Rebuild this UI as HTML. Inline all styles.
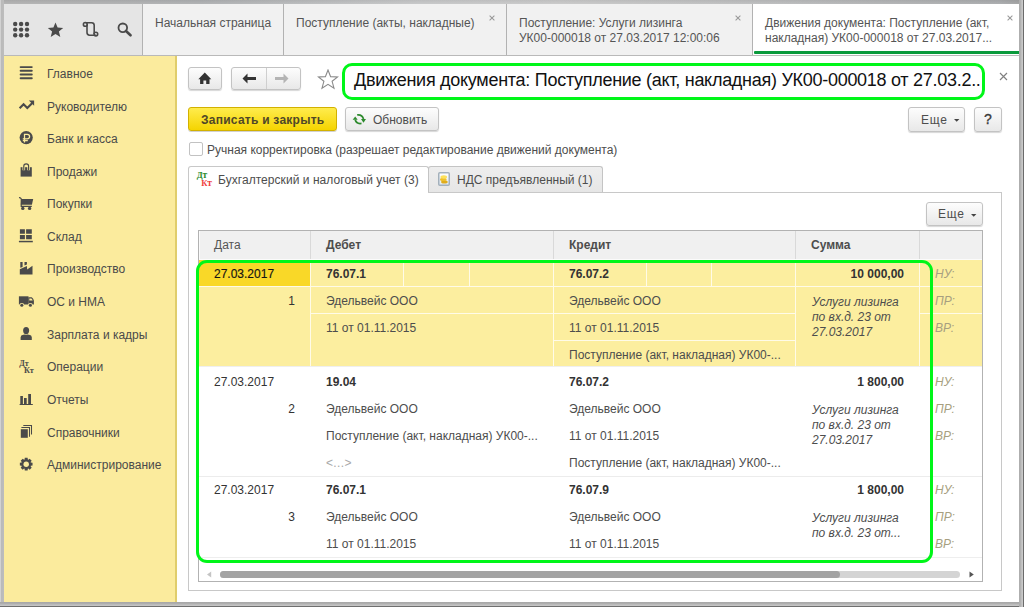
<!DOCTYPE html>
<html><head><meta charset="utf-8">
<style>
*{margin:0;padding:0;box-sizing:border-box}
html,body{width:1024px;height:607px;overflow:hidden}
body{position:relative;background:#fff;font-family:"Liberation Sans",sans-serif;color:#4d4d4d;font-size:12px;line-height:14px}
.a{position:absolute;white-space:nowrap}
/* window frame */
#ftop{left:0;top:0;width:1024px;height:4px;background:linear-gradient(rgba(0,0,0,0.05),rgba(255,255,255,0.05)),linear-gradient(90deg,#b2b2b2 0,#aeb0b2 200px,#c6c7c8 420px,#c9c9c9 560px,#bbbcbd 780px,#a9abad 1000px,#a0a0a0 1024px)}
#fleft{left:0;top:0;width:4px;height:607px;background:linear-gradient(90deg,#d2d2d2 0,#d2d2d2 1px,#bababa 1.5px,#bdbdbd)}
#fright{left:1019px;top:0;width:5px;height:607px;background:linear-gradient(90deg,#acacac 0,#b4b4b4 40%,#cacaca 60%,#c8c8c8 76%,#6e6e6e 84%,#666 100%)}
#fbot{left:0;top:602px;width:1019px;height:5px;background:linear-gradient(#a6a6a6 0,#b0b0b0 40%,#c4c4c4 60%,#c2c2c2 76%,#727272 84%,#6a6a6a 100%)}
/* top bar */
#topbar{left:4px;top:4px;width:1015px;height:52px;background:#f1f1f1;border-bottom:1px solid #b9b9b9}
#icons{left:0;top:0;width:139px;height:51px;background:#e5e5e5;border-right:1px solid #b2b2b2}
.tab{top:0;height:51px;border-right:1px solid #b2b2b2;color:#555}
.tx{color:#a0a0a0;font-size:13px}
/* sidebar */
#side{left:4px;top:56px;width:173px;height:546px;background:#fbeb9d;border-right:2px solid #e0cd6c}
.si{left:43px;color:#4a4a4a}
.sic{left:15px}
/* buttons */
.btn{border:1px solid #c3c3c3;border-radius:3px;background:linear-gradient(#fdfdfd,#e8e8e8);box-shadow:0 1px 1px rgba(0,0,0,0.16)}
.ybtn{border:1px solid #d2b100;border-radius:3px;background:linear-gradient(#ffec4d,#f5d400);box-shadow:0 1px 0 rgba(0,0,0,0.18)}
/* table */
.gl{background:#fff}
.hd{color:#4d4d4d;font-weight:bold}
.b{font-weight:bold;color:#333}
.it{font-style:italic;color:#4d4d4d}
.gr{font-style:italic;color:#a79f80}
.vl{width:1px;background:#fff}
.hl{height:1px;background:#fff}
</style></head><body>
<div id="ftop" class="a"></div>
<div id="fleft" class="a"></div>
<div id="fright" class="a"></div>
<div id="fbot" class="a"></div>

<div id="topbar" class="a">
  <div id="icons" class="a">
    <svg class="a" style="left:8px;top:17px" width="18" height="18" viewBox="0 0 18 18" fill="#4a4a4a"><circle cx="3.2" cy="3.0" r="2.2"/><circle cx="9.1" cy="3.0" r="2.2"/><circle cx="15.0" cy="3.0" r="2.2"/><circle cx="3.2" cy="8.6" r="2.2"/><circle cx="9.1" cy="8.6" r="2.2"/><circle cx="15.0" cy="8.6" r="2.2"/><circle cx="3.2" cy="14.2" r="2.2"/><circle cx="9.1" cy="14.2" r="2.2"/><circle cx="15.0" cy="14.2" r="2.2"/></svg>
    <svg class="a" style="left:43px;top:18px" width="17" height="16" viewBox="0 0 17 16" fill="#4a4a4a">
      <path d="M8.5 0.5 L10.6 5.6 L16.2 5.9 L11.9 9.5 L13.3 15 L8.5 12 L3.7 15 L5.1 9.5 L0.8 5.9 L6.4 5.6 Z"/>
    </svg>
    <svg class="a" style="left:74px;top:14px" width="26" height="22" viewBox="0 0 26 22" fill="none" stroke="#4a4a4a" stroke-width="1.6">
      <circle cx="7.3" cy="6.4" r="1.9"/><circle cx="17.9" cy="16.1" r="1.8"/>
      <path d="M7.3 4.7 H13.6 Q16.2 4.7 16.2 7.3 V16.1"/>
      <path d="M9 6.4 V14.6 Q9 17.2 11.6 17.2 H17.9"/>
    </svg>
    <svg class="a" style="left:113px;top:18px" width="16" height="15" viewBox="0 0 16 15" fill="none" stroke="#4a4a4a">
      <circle cx="5.8" cy="5.8" r="4.3" stroke-width="1.8"/>
      <path d="M9 9 L13.5 13.3" stroke-width="2.6" stroke-linecap="round"/>
    </svg>
  </div>
  <div class="a tab" style="left:139px;width:141px"><span class="a" style="left:12px;top:12px">Начальная страница</span></div>
  <div class="a tab" style="left:280px;width:223px"><span class="a" style="left:12px;top:12px">Поступление (акты, накладные)</span><svg class="a" style="left:205px;top:11px" width="6" height="6" viewBox="0 0 6 6" stroke="#999" stroke-width="1.05"><path d="M0.6 0.6 L5.4 5.4 M5.4 0.6 L0.6 5.4"/></svg></div>
  <div class="a tab" style="left:503px;width:246px"><span class="a" style="left:12px;top:12px;line-height:14.6px">Поступление: Услуги лизинга<br>УК00-000018 от 27.03.2017 12:00:06</span><svg class="a" style="left:228px;top:11px" width="6" height="6" viewBox="0 0 6 6" stroke="#999" stroke-width="1.05"><path d="M0.6 0.6 L5.4 5.4 M5.4 0.6 L0.6 5.4"/></svg></div>
  <div class="a tab" style="left:749px;width:266px;background:#fff;border-right:0"><span class="a" style="left:12px;top:12px;line-height:14.6px">Движения документа: Поступление (акт,<br>накладная) УК00-000018 от 27.03.2017...</span><svg class="a" style="left:254px;top:11px" width="6" height="6" viewBox="0 0 6 6" stroke="#999" stroke-width="1.05"><path d="M0.6 0.6 L5.4 5.4 M5.4 0.6 L0.6 5.4"/></svg>
    <div class="a" style="left:1px;top:47px;width:265px;height:3px;background:#0a9a3c;border-radius:1px 0 0 1px"></div>
  </div>
</div>

<div id="side" class="a">
  <span class="a si" style="top:11px">Главное</span>
  <span class="a si" style="top:44px">Руководителю</span>
  <span class="a si" style="top:76px">Банк и касса</span>
  <span class="a si" style="top:109px">Продажи</span>
  <span class="a si" style="top:141px">Покупки</span>
  <span class="a si" style="top:174px">Склад</span>
  <span class="a si" style="top:206px">Производство</span>
  <span class="a si" style="top:239px">ОС и НМА</span>
  <span class="a si" style="top:272px">Зарплата и кадры</span>
  <span class="a si" style="top:304px">Операции</span>
  <span class="a si" style="top:337px">Отчеты</span>
  <span class="a si" style="top:370px">Справочники</span>
  <span class="a si" style="top:402px">Администрирование</span>
</div>
<svg class="a" style="left:0;top:0" width="176" height="480" viewBox="0 0 176 480">
<g fill="#4a4a4a" stroke="none">
<g stroke="#4a4a4a" stroke-width="1.9" stroke-linecap="round"><path d="M20.6 67.1 H31.8 M20.6 70.8 H31.8 M20.6 74.5 H31.8 M20.6 78.2 H31.8"/></g>
<path d="M19.6 108.3 L23.6 104.2 L27.3 107.9 L32.3 102.9" fill="none" stroke="#4a4a4a" stroke-width="2.1" stroke-linejoin="miter"/>
<path d="M28.9 100.6 H34.1 V105.8 Z"/>
<circle cx="26.2" cy="137.6" r="6.6"/>
<path d="M24.5 142.6 V134.4 H27.3 Q29.6 134.4 29.6 136.6 Q29.6 138.8 27.3 138.8 H22.8 M22.8 140.5 H27.8" fill="none" stroke="#fbeb9d" stroke-width="1.25"/>
<path d="M20.6 167.2 H31.8 V176.6 H20.6 Z"/>
<path d="M23.8 170.2 V166 Q23.8 163.4 26.2 163.4 Q28.6 163.4 28.6 166 V170.2" fill="none" stroke="#fbeb9d" stroke-width="2.6"/>
<path d="M23.8 170.2 V166 Q23.8 163.8 26.2 163.8 Q28.6 163.8 28.6 166 V170.2" fill="none" stroke="#4a4a4a" stroke-width="1.15"/>
<path d="M19 197.6 Q20.7 197.4 21.3 199 L21.2 206.4 H31.8" fill="none" stroke="#4a4a4a" stroke-width="1.2"/>
<path d="M21.2 199.1 H33.2 L31.9 204.7 H20.8 Z"/>
<circle cx="22.8" cy="208.4" r="1.7"/><circle cx="29.6" cy="208.4" r="1.7"/>
<path d="M19.9 229.3 H24.9 V233.8 H19.9 Z M26.1 229.3 H31.8 V233.8 H26.1 Z M19.9 235.1 H24.9 V239.2 H19.9 Z M26.1 235.1 H31.8 V239.2 H26.1 Z"/>
<path d="M18.9 240.8 H32.8 V242.3 H18.9 Z"/>
<path d="M20.3 262.1 H22.6 V266.9 L20.3 267.8 Z M24.5 262.1 H26.9 V264.6 L24.5 265.6 Z"/>
<path d="M19.8 269.2 L26.9 265.9 L27.2 269.4 L32.5 265.8 V274.6 H19.8 Z"/>
<path d="M18.9 296.3 H28.5 V304.5 H18.9 Z"/>
<path d="M28.3 297.2 H31.7 Q33.5 298.6 33.9 300.8 V304.5 H28.3 Z"/>
<path d="M29.3 298.4 H31.4 Q32.4 299.4 32.7 300.6 H29.3 Z" fill="#fbeb9d"/>
<circle cx="21.8" cy="305.3" r="2.4" fill="#fbeb9d"/><circle cx="30.4" cy="305.3" r="2.4" fill="#fbeb9d"/>
<circle cx="21.8" cy="305.3" r="1.55"/><circle cx="30.4" cy="305.3" r="1.55"/>
<ellipse cx="26.1" cy="330.6" rx="3" ry="3.6"/>
<path d="M20.6 340 V337.2 Q20.6 335.2 23.3 334.8 L25 334.6 Q26.1 335.5 27.2 334.6 L29 334.8 Q31.8 335.2 31.8 337.2 V340 Z"/>
<text x="19.3" y="366.1" font-family="Liberation Serif" font-weight="bold" font-size="8">Дт</text>
<text x="24.1" y="372.8" font-family="Liberation Serif" font-weight="bold" font-size="8.2">Кт</text>
<path d="M20.3 396.1 H22.9 V404.3 H20.3 Z M24 398.1 H26.7 V404.3 H24 Z M28.2 394.1 H31 V404.3 H28.2 Z M19.6 404.1 H32.8 V405 H19.6 Z"/>
<path d="M20.8 429.2 H27.8 V437.8 H20.8 Z"/>
<path d="M21.4 427.5 H29.5 V436.8" fill="none" stroke="#4a4a4a" stroke-width="1.05"/>
<path d="M23.3 425.5 H31.5 V434.6" fill="none" stroke="#4a4a4a" stroke-width="1.05"/>
<path d="M24.57 459.58 L24.78 457.86 L27.62 457.86 L27.83 459.58 L28.31 459.78 L29.68 458.71 L31.69 460.72 L30.62 462.09 L30.82 462.57 L32.54 462.78 L32.54 465.62 L30.82 465.83 L30.62 466.31 L31.69 467.68 L29.68 469.69 L28.31 468.62 L27.83 468.82 L27.62 470.54 L24.78 470.54 L24.57 468.82 L24.09 468.62 L22.72 469.69 L20.71 467.68 L21.78 466.31 L21.58 465.83 L19.86 465.62 L19.86 462.78 L21.58 462.57 L21.78 462.09 L20.71 460.72 L22.72 458.71 L24.09 459.78 Z"/>
<circle cx="26.2" cy="464.2" r="2.7" fill="#fbeb9d"/>
</g></svg>

<!-- content header -->
<div class="a btn" style="left:188px;top:67px;width:34px;height:23px"></div>
<svg class="a" style="left:198px;top:72px" width="14" height="13" viewBox="0 0 14 13" fill="#333"><path d="M6.8 0.6 L13.3 7.2 H11.5 V12 H8.2 V8.6 H5.4 V12 H2.1 V7.2 H0.3 Z"/></svg>
<div class="a btn" style="left:231px;top:67px;width:70px;height:23px"></div>
<div class="a" style="left:266px;top:68px;width:1px;height:21px;background:#cfcfcf"></div>
<svg class="a" style="left:242px;top:73px" width="16" height="11" viewBox="0 0 16 11" fill="#333"><path d="M0.5 5.5 L5.5 0.5 V4 H14 V7 H5.5 V10.5 Z"/></svg>
<svg class="a" style="left:274px;top:73px" width="16" height="11" viewBox="0 0 16 11" fill="#b4b4b4"><path d="M14.5 5.5 L9.5 0.6 V4 H1 V7 H9.5 V10.4 Z"/></svg>
<svg class="a" style="left:317px;top:69px" width="22" height="21" viewBox="0 0 22 21" fill="#fff" stroke="#8a8a8a" stroke-width="1.1"><path d="M11 1 L13.6 7.6 L20.6 7.9 L15.1 12.3 L17 19.2 L11 15.3 L5 19.2 L6.9 12.3 L1.4 7.9 L8.4 7.6 Z"/></svg>
<div class="a" style="left:354px;top:70px;font-size:18px;letter-spacing:-0.28px;line-height:20px;color:#111">Движения документа: Поступление (акт, накладная) УК00-000018 от 27.03.2..</div>
<svg class="a" style="left:999px;top:72px" width="9" height="9" viewBox="0 0 9 9" stroke="#808080" stroke-width="1.15"><path d="M1 1 L8 8 M8 1 L1 8"/></svg>

<div class="a ybtn" style="left:188px;top:107px;width:149px;height:24px"></div>
<span class="a" style="left:201px;top:113px;font-weight:bold;color:#4f4728;letter-spacing:0.25px">Записать и закрыть</span>
<div class="a btn" style="left:345px;top:107px;width:94px;height:24px"></div>
<svg class="a" style="left:350px;top:112px" width="18" height="14" viewBox="0 0 18 14" fill="#2d8a2d"><path d="M7.2 2.9 Q12.3 2.3 13.5 7" fill="none" stroke="#2d8a2d" stroke-width="1.7"/><path d="M11 7 H16 L13.5 10.8 Z"/><path d="M11.5 11.4 Q6.4 12.2 5.2 7.8" fill="none" stroke="#2d8a2d" stroke-width="1.7"/><path d="M2.7 7.8 H7.7 L5.2 4.4 Z"/></svg>
<span class="a" style="left:373px;top:113px">Обновить</span>
<div class="a btn" style="left:908px;top:107px;width:57px;height:25px"></div>
<span class="a" style="left:921px;top:113px;letter-spacing:0.8px">Еще</span>
<svg class="a" style="left:954px;top:119px" width="6" height="4" viewBox="0 0 6 4" fill="#444"><path d="M0 0 H5.4 L2.7 2.8 Z"/></svg>
<div class="a btn" style="left:974px;top:107px;width:28px;height:25px"></div>
<span class="a" style="left:984px;top:111px;font-size:14px;line-height:16px;color:#3a3a3a;-webkit-text-stroke:0.35px #3a3a3a">?</span>

<div class="a" style="left:189px;top:142px;width:14px;height:14px;border:1.5px solid #c2c2c2;border-radius:2px;background:#fff"></div>
<span class="a" style="left:207px;top:142.5px">Ручная корректировка (разрешает редактирование движений документа)</span>

<!-- tab panel -->
<div class="a" style="left:188px;top:192px;width:814px;height:399px;border:1px solid #c8c8c8;background:#fff"></div>
<div class="a" style="left:188px;top:166px;width:241px;height:27px;border:1px solid #c8c8c8;border-bottom:0;border-radius:3px 3px 0 0;background:#fff"></div>
<svg class="a" style="left:195px;top:170px" width="18" height="18" viewBox="0 0 18 18"><text x="1.8" y="7.6" font-family="Liberation Serif" font-weight="bold" font-size="8.6" fill="#2a8a2a" letter-spacing="-0.3">Д<tspan font-size="9.6">т</tspan></text><text x="6.2" y="15.5" font-family="Liberation Serif" font-weight="bold" font-size="8.6" fill="#f03e3e" letter-spacing="-0.3">К<tspan font-size="9.6">т</tspan></text></svg>
<span class="a" style="left:218px;top:173px;letter-spacing:0.05px">Бухгалтерский и налоговый учет (3)</span>
<div class="a" style="left:428px;top:166px;width:175px;height:26px;border:1px solid #c4c4c4;border-bottom:0;border-radius:3px 3px 0 0;background:linear-gradient(#eeeeee,#e6e6e6)"></div>
<svg class="a" style="left:438px;top:172px" width="12" height="14" viewBox="0 0 12 14"><defs><linearGradient id="cg" x1="0" y1="0" x2="0" y2="1"><stop offset="0" stop-color="#fff"/><stop offset="1" stop-color="#dce8f4"/></linearGradient></defs><rect x="0.75" y="0.75" width="10.5" height="12.5" rx="1" fill="url(#cg)" stroke="#a3b0bb" stroke-width="1.5"/><ellipse cx="6.4" cy="9.9" rx="3.3" ry="1.7" fill="#e0ac1c"/><ellipse cx="5.3" cy="7.4" rx="3.3" ry="1.7" fill="#eebf2a"/><ellipse cx="5.8" cy="5" rx="3.3" ry="1.7" fill="#fde05a"/></svg>
<span class="a" style="left:457px;top:173px">НДС предъявленный (1)</span>

<div class="a btn" style="left:926px;top:202px;width:57px;height:24px"></div>
<span class="a" style="left:938px;top:207px;letter-spacing:0.8px">Еще</span>
<svg class="a" style="left:971px;top:214px" width="6" height="4" viewBox="0 0 6 4" fill="#444"><path d="M0 0 H5.4 L2.7 2.8 Z"/></svg>

<!-- table -->
<div class="a" style="left:198px;top:230px;width:785px;height:352px;background:#fff;border:1px solid #b2b2b2"></div>
<div class="a" style="left:199px;top:231px;width:783px;height:28px;background:#f0f0f0;"></div>
<div class="a" style="left:199px;top:259px;width:783px;height:1px;background:#fbfbfb;"></div>
<div class="a" style="left:199px;top:231px;width:1px;height:28px;background:#fafafa;"></div>
<div class="a" style="left:310px;top:231px;width:1px;height:28px;background:#d9d9d9;"></div>
<div class="a" style="left:553px;top:231px;width:1px;height:28px;background:#d9d9d9;"></div>
<div class="a" style="left:795px;top:231px;width:1px;height:28px;background:#d9d9d9;"></div>
<div class="a" style="left:919px;top:231px;width:1px;height:28px;background:#d9d9d9;"></div>
<span class="a " style="left:214px;top:238px;color:#555">Дата</span>
<span class="a hd" style="left:326px;top:238px;">Дебет</span>
<span class="a hd" style="left:569px;top:238px;">Кредит</span>
<span class="a hd" style="left:811px;top:238px;">Сумма</span>
<div class="a" style="left:199px;top:260px;width:783px;height:106px;background:#fcee9f;"></div>
<div class="a" style="left:199px;top:260px;width:111px;height:26px;background:#f9d828;"></div>
<div class="a" style="left:199px;top:366px;width:783px;height:1px;background:#efefef;"></div>
<div class="a" style="left:310px;top:260px;width:1px;height:106px;background:#fffbe8;"></div>
<div class="a" style="left:553px;top:260px;width:1px;height:106px;background:#fffbe8;"></div>
<div class="a" style="left:795px;top:260px;width:1px;height:106px;background:#fffbe8;"></div>
<div class="a" style="left:919px;top:260px;width:1px;height:106px;background:#fffbe8;"></div>
<div class="a" style="left:403px;top:260px;width:1px;height:26px;background:#fffbe8;"></div>
<div class="a" style="left:469px;top:260px;width:1px;height:26px;background:#fffbe8;"></div>
<div class="a" style="left:646px;top:260px;width:1px;height:26px;background:#fffbe8;"></div>
<div class="a" style="left:711px;top:260px;width:1px;height:26px;background:#fffbe8;"></div>
<div class="a" style="left:199px;top:286px;width:111px;height:1px;background:#fffbe8;"></div>
<div class="a" style="left:311px;top:286px;width:242px;height:1px;background:#fffbe8;"></div>
<div class="a" style="left:311px;top:313px;width:242px;height:1px;background:#fffbe8;"></div>
<div class="a" style="left:554px;top:286px;width:241px;height:1px;background:#fffbe8;"></div>
<div class="a" style="left:554px;top:313px;width:241px;height:1px;background:#fffbe8;"></div>
<div class="a" style="left:554px;top:340px;width:241px;height:1px;background:#fffbe8;"></div>
<div class="a" style="left:796px;top:286px;width:123px;height:1px;background:#fffbe8;"></div>
<div class="a" style="left:920px;top:286px;width:62px;height:1px;background:#fffbe8;"></div>
<div class="a" style="left:920px;top:313px;width:62px;height:1px;background:#fffbe8;"></div>
<span class="a " style="left:214px;top:267px;color:#141414;-webkit-text-stroke:0.15px #141414">27.03.2017</span>
<span class="a " style="right:729px;top:294px;color:#333">1</span>
<span class="a b" style="left:326px;top:267px;">76.07.1</span>
<span class="a " style="left:326px;top:294px;">Эдельвейс ООО</span>
<span class="a " style="left:326px;top:321px;">11 от 01.11.2015</span>
<span class="a b" style="left:569px;top:267px;">76.07.2</span>
<span class="a " style="left:569px;top:294px;">Эдельвейс ООО</span>
<span class="a " style="left:569px;top:321px;">11 от 01.11.2015</span>
<span class="a " style="left:569px;top:348px;">Поступление (акт, накладная) УК00-...</span>
<span class="a b" style="right:120px;top:267px;">10 000,00</span>
<span class="a it" style="left:812px;top:295px;line-height:15px">Услуги лизинга<br>по вх.д. 23 от<br>27.03.2017</span>
<span class="a gr" style="left:935px;top:267px;">НУ:</span>
<span class="a gr" style="left:935px;top:294px;">ПР:</span>
<span class="a gr" style="left:935px;top:321px;">ВР:</span>
<div class="a" style="left:199px;top:476px;width:783px;height:1px;background:#ececec;"></div>
<span class="a " style="left:214px;top:375px;color:#333">27.03.2017</span>
<span class="a " style="right:729px;top:402px;color:#333">2</span>
<span class="a b" style="left:326px;top:375px;">19.04</span>
<span class="a " style="left:326px;top:402px;">Эдельвейс ООО</span>
<span class="a " style="left:326px;top:429px;">Поступление (акт, накладная) УК00-...</span>
<span class="a " style="left:326px;top:456px;color:#a8a8a8;letter-spacing:0.35px">&lt;...&gt;</span>
<span class="a b" style="left:569px;top:375px;">76.07.2</span>
<span class="a " style="left:569px;top:402px;">Эдельвейс ООО</span>
<span class="a " style="left:569px;top:429px;">11 от 01.11.2015</span>
<span class="a " style="left:569px;top:456px;">Поступление (акт, накладная) УК00-...</span>
<span class="a b" style="right:120px;top:375px;">1 800,00</span>
<span class="a it" style="left:812px;top:403px;line-height:15px">Услуги лизинга<br>по вх.д. 23 от<br>27.03.2017</span>
<span class="a gr" style="left:935px;top:375px;">НУ:</span>
<span class="a gr" style="left:935px;top:402px;">ПР:</span>
<span class="a gr" style="left:935px;top:429px;">ВР:</span>
<span class="a " style="left:214px;top:483px;color:#333">27.03.2017</span>
<span class="a " style="right:729px;top:510px;color:#333">3</span>
<span class="a b" style="left:326px;top:483px;">76.07.1</span>
<span class="a " style="left:326px;top:510px;">Эдельвейс ООО</span>
<span class="a " style="left:326px;top:537px;">11 от 01.11.2015</span>
<span class="a b" style="left:569px;top:483px;">76.07.9</span>
<span class="a " style="left:569px;top:510px;">Эдельвейс ООО</span>
<span class="a " style="left:569px;top:537px;">11 от 01.11.2015</span>
<span class="a b" style="right:120px;top:483px;">1 800,00</span>
<span class="a it" style="left:812px;top:511px;line-height:15px">Услуги лизинга<br>по вх.д. 23 от...</span>
<span class="a gr" style="left:935px;top:483px;">НУ:</span>
<span class="a gr" style="left:935px;top:510px;">ПР:</span>
<span class="a gr" style="left:935px;top:537px;">ВР:</span>
<div class="a" style="left:199px;top:557px;width:783px;height:1px;background:#eeeeee;"></div>
<svg class="a" style="left:206px;top:571px" width="6" height="7" viewBox="0 0 6 7"><path d="M5.2 0.5 V6.5 L1 3.5 Z" fill="#c4c4c4"/></svg>
<div class="a" style="left:220px;top:571px;width:740px;height:7px;background:#d4d4d4;border-radius:4px"></div>
<div class="a" style="left:220px;top:571px;width:620px;height:7px;background:#a3a3a3;border-radius:4px"></div>
<svg class="a" style="left:969px;top:571px" width="6" height="7" viewBox="0 0 6 7"><path d="M0.5 0.5 V6.5 L4.8 3.5 Z" fill="#555"/></svg>
<div class="a" style="left:196px;top:260px;width:737px;height:303px;border:3px solid #00f618;border-radius:11px"></div>
<div class="a" style="left:342px;top:63px;width:643px;height:37px;border:3px solid #00f618;border-radius:10px"></div>
</body></html>
